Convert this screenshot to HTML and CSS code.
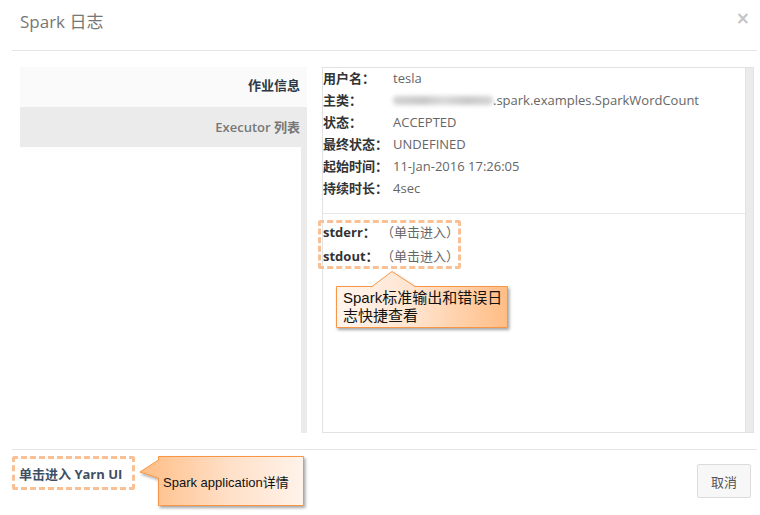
FILE: index.html
```html
<!DOCTYPE html>
<html lang="zh">
<head>
<meta charset="utf-8">
<title>Spark 日志</title>
<link rel="stylesheet" href="styles.css">
</head>
<body>
<div class="modal">
  <div class="header">
    <span class="title">Spark 日志</span>
    <span class="close">×</span>
  </div>
  <div class="body">
    <div class="nav">
      <div class="nav-item active">作业信息</div>
      <div class="nav-item">Executor 列表</div>
      <div class="nav-fill"></div>
    </div>
    <div class="panel">
      <div class="panel-content">
        <div class="info">
          <div class="row"><span class="label">用户名：</span><span class="value">tesla</span></div>
          <div class="row"><span class="label">主类：</span><span class="value"><span class="blur"></span>.spark.examples.SparkWordCount</span></div>
          <div class="row"><span class="label">状态：</span><span class="value">ACCEPTED</span></div>
          <div class="row"><span class="label">最终状态：</span><span class="value">UNDEFINED</span></div>
          <div class="row"><span class="label">起始时间：</span><span class="value">11-Jan-2016 17:26:05</span></div>
          <div class="row"><span class="label">持续时长：</span><span class="value">4sec</span></div>
        </div>
        <div class="logs">
          <div class="log-row"><span class="log-label">stderr：</span><span class="link">（单击进入）</span></div>
          <div class="log-row"><span class="log-label">stdout：</span><span class="link">（单击进入）</span></div>
        </div>
      </div>
      <div class="scrollbar"></div>
    </div>
  </div>
  <div class="footer">
    <span class="yarn">单击进入 Yarn UI</span>
    <button class="btn">取消</button>
  </div>

  <div class="dash dash-logs"></div>
  <div class="dash dash-yarn"></div>

  <svg class="callout-shape callout-shape-1" width="190" height="72" viewBox="0 0 190 72">
    <defs>
      <linearGradient id="g1" x1="0" y1="0" x2="1" y2="0">
        <stop offset="0" stop-color="#fff5ee"/>
        <stop offset="0.45" stop-color="#ffe4cf"/>
        <stop offset="1" stop-color="#ffbd84"/>
      </linearGradient>
      <filter id="sh1" x="-10%" y="-10%" width="130%" height="140%">
        <feDropShadow dx="1.5" dy="2" stdDeviation="1.5" flood-color="#000" flood-opacity="0.35"/>
      </filter>
    </defs>
    <path d="M6.5 20.5 H42 L62 5.5 L85 20.5 H177.5 V61.5 H6.5 Z" fill="url(#g1)" stroke="#f79646" stroke-width="1" filter="url(#sh1)"/>
  </svg>
  <div class="callout-text callout-text-1">Spark标准输出和错误日<br>志快捷查看</div>

  <svg class="callout-shape callout-shape-2" width="182" height="64" viewBox="0 0 182 64">
    <defs>
      <linearGradient id="g2" x1="0" y1="0" x2="1" y2="0">
        <stop offset="0" stop-color="#ffbd84"/>
        <stop offset="0.55" stop-color="#ffe0c8"/>
        <stop offset="1" stop-color="#fff3ea"/>
      </linearGradient>
      <filter id="sh2" x="-10%" y="-10%" width="130%" height="140%">
        <feDropShadow dx="1.5" dy="2" stdDeviation="1.5" flood-color="#000" flood-opacity="0.35"/>
      </filter>
    </defs>
    <path d="M26.5 6.5 H171.5 V55.5 H26.5 V28 L8 22 L26.5 10 Z" fill="url(#g2)" stroke="#f79646" stroke-width="1" filter="url(#sh2)"/>
  </svg>
  <div class="callout-text callout-text-2">Spark application详情</div>
</div>
</body>
</html>
```
FILE: styles.css
```css
* { box-sizing: border-box; }
html, body { margin: 0; padding: 0; background: #fff; }
body {
  width: 760px;
  height: 515px;
  overflow: hidden;
  font-family: "Open Sans", "Noto Sans CJK SC", sans-serif;
  font-size: 13px;
  color: #666;
}
.modal {
  position: relative;
  width: 760px;
  height: 515px;
  display: flex;
  flex-direction: column;
}
.header {
  height: 51px;
  margin: 0 3px 0 12px;
  padding: 10px 7px 0 8px;
  border-bottom: 1px solid #e5e5e5;
  display: flex;
  justify-content: space-between;
  align-items: flex-start;
}
.title {
  font-size: 17px;
  line-height: 24px;
  color: #777;
}
.close {
  font-family: "DejaVu Sans", sans-serif;
  font-size: 17px;
  line-height: 16px;
  color: #c4c4c4;
  font-weight: bold;
}
.body {
  display: flex;
  padding: 16px 6px 16px 20px;
  height: 398px;
  gap: 15px;
}
.nav {
  width: 287px;
  display: flex;
  flex-direction: column;
}
.nav-item {
  height: 40px;
  line-height: 40px;
  text-align: right;
  padding-right: 7px;
  background: #ebebeb;
  color: #777;
  font-weight: 600;
}
.nav-item.active {
  background: #fafafa;
  color: #2c3845;
  font-weight: 700;
  line-height: 37px;
}
.nav-fill {
  flex: 1;
  background: #fff;
  border-right: 6px solid #ebebeb;
}
.panel {
  flex: 1;
  display: flex;
  border: 1px solid #e2e2e2;
}
.panel-content {
  flex: 1;
  display: flex;
  flex-direction: column;
}
.scrollbar {
  width: 8px;
  background: #ebebeb;
  border-left: 1px solid #e3e3e3;
}
.info {
  padding: 0 0 14px 0;
  margin-top: -1px;
  border-bottom: 1px solid #e8e8e8;
}
.row {
  display: flex;
  line-height: 22px;
  height: 22px;
  white-space: nowrap;
}
.label {
  width: 70px;
  flex: none;
  font-weight: 700;
  color: #333;
}
.value { color: #666; display: flex; align-items: center; }
.blur {
  display: inline-block;
  width: 100px;
  height: 9px;
  margin-top: 1px;
  border-radius: 4px;
  background: linear-gradient(90deg, #d4d4d4 0%, #c8c8c8 30%, #dadada 50%, #c9c9c9 75%, #d6d6d6 100%);
  filter: blur(2px);
}
.logs {
  padding-top: 6px;
}
.log-row {
  line-height: 24px;
  white-space: nowrap;
}
.log-label {
  font-weight: 700;
  color: #333;
  display: inline-block;
  width: 58px;
}
.link { color: #666; }
.footer {
  margin: 0 3px 0 12px;
  border-top: 1px solid #e5e5e5;
  padding: 14px 6px 0 7px;
  display: flex;
  justify-content: space-between;
  align-items: flex-start;
  flex: 1;
}
.yarn {
  line-height: 20px;
  font-weight: 700;
  color: #3f4f63;
}
.btn {
  width: 54px;
  height: 34px;
  font-family: "Open Sans", "Noto Sans CJK SC", sans-serif;
  font-size: 13px;
  color: #555;
  background: #f7f7f7;
  border: 1px solid #dcdcdc;
  border-radius: 2px;
  padding: 0;
}
.dash {
  position: absolute;
  border: 3px dashed #f9c096;
  border-radius: 3px;
}
.dash-logs { left: 318px; top: 220px; width: 143px; height: 49px; }
.dash-yarn { left: 12px; top: 456px; width: 123px; height: 34px; }
.callout-shape {
  position: absolute;
  overflow: visible;
}
.callout-shape-1 { left: 330px; top: 266px; }
.callout-shape-2 { left: 132px; top: 450px; }
.callout-text {
  position: absolute;
  font-family: "Liberation Sans", "Noto Sans CJK SC", sans-serif;
  color: #111;
  white-space: nowrap;
}
.callout-text-1 {
  left: 343px;
  top: 289px;
  font-size: 15px;
  line-height: 18px;
}
.callout-text-2 {
  left: 163px;
  top: 474px;
  font-size: 13px;
  line-height: 18px;
}
```
